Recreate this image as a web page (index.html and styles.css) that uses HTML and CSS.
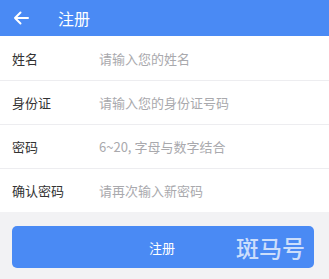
FILE: index.html
```html
<!DOCTYPE html>
<html lang="zh">
<head>
<meta charset="utf-8">
<link rel="stylesheet" href="styles.css">
</head>
<body>
<div class="app">
  <header class="topbar">
    <svg class="back" viewBox="0 0 16 14" width="16" height="14">
      <path d="M15 7H2M7.5 1.5L2 7l5.5 5.5" fill="none" stroke="#fff" stroke-width="2" stroke-linecap="round" stroke-linejoin="round"/>
    </svg>
    <span class="title">注册</span>
  </header>
  <form class="form">
    <div class="row"><span class="label">姓名</span><span class="ph">请输入您的姓名</span></div>
    <div class="row"><span class="label">身份证</span><span class="ph">请输入您的身份证号码</span></div>
    <div class="row"><span class="label">密码</span><span class="ph">6~20, 字母与数字结合</span></div>
    <div class="row"><span class="label">确认密码</span><span class="ph">请再次输入新密码</span></div>
  </form>
  <div class="actions">
    <div class="btn"><span class="btn-text">注册</span><span class="mark">斑马号</span></div>
  </div>
</div>
</body>
</html>
```
FILE: styles.css
```css
html, body {
  margin: 0;
  padding: 0;
  background: #f2f2f4;
  font-family: "Noto Sans CJK SC", "Noto Sans", sans-serif;
}
.app {
  width: 329px;
  height: 279px;
  overflow: hidden;
  display: flex;
  flex-direction: column;
}
.topbar {
  height: 36px;
  background: #4a8af4;
  display: flex;
  align-items: center;
  padding-left: 13px;
  color: #fff;
  flex-shrink: 0;
}
.back {
  display: block;
}
.title {
  margin-left: 29px;
  font-size: 16px;
  line-height: 1;
}
.form {
  background: #fff;
  margin: 0;
}
.row {
  height: 44px;
  display: flex;
  align-items: center;
  padding-left: 12px;
  border-top: 1px solid #ededf0;
  box-sizing: border-box;
}
.row:first-child {
  border-top: none;
}
.label {
  width: 87px;
  font-size: 13px;
  color: #333;
}
.ph {
  font-size: 13px;
  color: #a9a9ad;
}
.actions {
  padding: 14px 15px 0 12px;
}
.btn {
  height: 42px;
  border-radius: 5px;
  background: #4a8af4;
  display: flex;
  align-items: center;
  position: relative;
}
.btn-text {
  margin-left: 137px;
  font-size: 13px;
  color: #fff;
}
.mark {
  position: absolute;
  right: 9px;
  top: 50%;
  transform: translateY(-50%);
  font-size: 23px;
  font-weight: 500;
  color: rgba(255, 255, 255, 0.72);
}
```
